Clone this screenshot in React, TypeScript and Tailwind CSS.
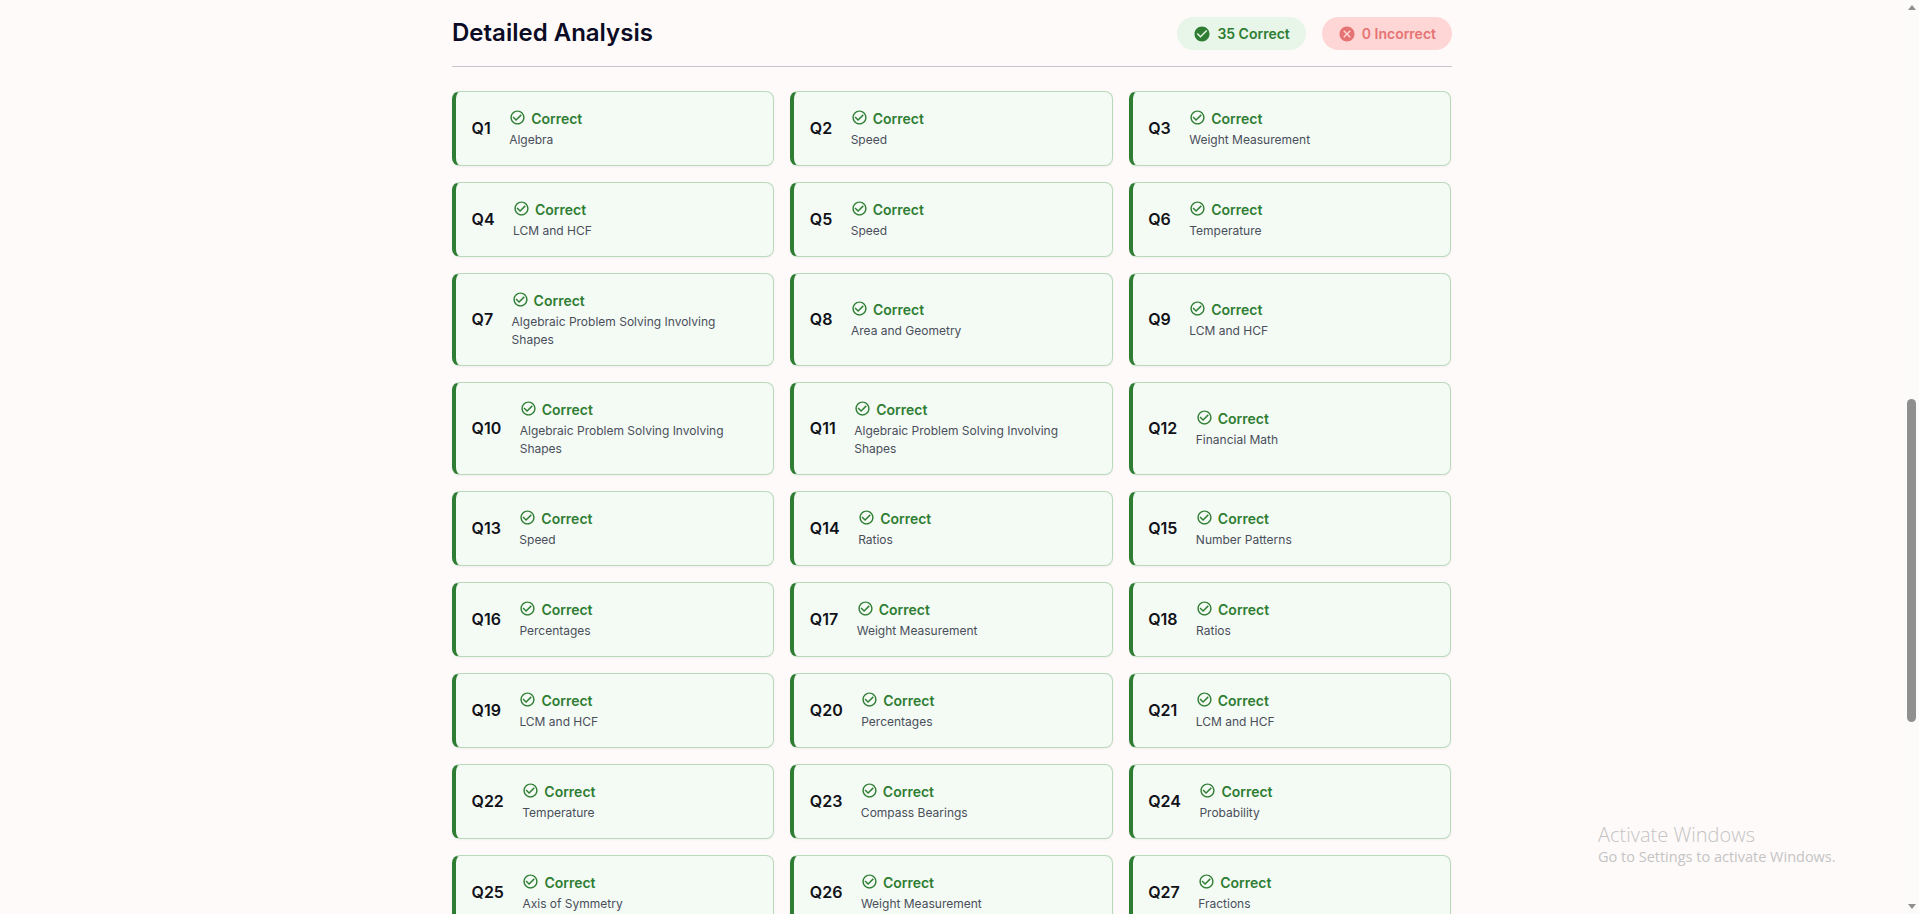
import { MdCancel, MdCheckCircle, MdCheckCircleOutline } from "react-icons/md";

const topics = [
  "Algebra",
  "Speed",
  "Weight Measurement",
  "LCM and HCF",
  "Speed",
  "Temperature",
  "Algebraic Problem Solving Involving Shapes",
  "Area and Geometry",
  "LCM and HCF",
  "Algebraic Problem Solving Involving Shapes",
  "Algebraic Problem Solving Involving Shapes",
  "Financial Math",
  "Speed",
  "Ratios",
  "Number Patterns",
  "Percentages",
  "Weight Measurement",
  "Ratios",
  "LCM and HCF",
  "Percentages",
  "LCM and HCF",
  "Temperature",
  "Compass Bearings",
  "Probability",
  "Axis of Symmetry",
  "Weight Measurement",
  "Fractions",
];

function QuestionCard({ index, topic }: { index: number; topic: string }) {
  return (
    <div className="flex items-center gap-[18.5px] rounded-lg border border-l-4 border-[#b9d9bb] border-l-[#2e7d32] bg-[#f4fbf5] py-4 pl-[15.5px] pr-4 shadow-[0_1px_3px_rgba(0,0,0,0.05)]">
      <div className="pb-[2px] text-base font-semibold leading-6 text-[#111118]">Q{index + 1}</div>
      <div className="min-w-0 flex-1">
        <div className="flex items-center gap-[5px] text-sm font-semibold leading-[21px] text-[#2e7d32]">
          <MdCheckCircleOutline size={17} className="-mt-[2px] shrink-0" />
          <span>Correct</span>
        </div>
        <div className="mt-[2px] text-xs leading-[18px] text-[#4a4e5a]">{topic}</div>
      </div>
    </div>
  );
}

export default function App() {
  return (
    <div className="relative flex h-screen overflow-hidden bg-[#fdfbfa] font-['Inter',sans-serif]">
      <main className="h-full min-w-0 flex-1 overflow-hidden bg-[#fefaf9] pt-[17px]">
        <div className="mx-auto w-[1000px]">
          <div className="flex items-center justify-between border-b border-[#c6c6d0] pb-4">
            <h2 className="self-start text-2xl font-semibold leading-[31px] text-[#0b0b25]">Detailed Analysis</h2>
            <div className="flex gap-4">
              <div className="flex h-[33px] items-center gap-[6px] rounded-full bg-[#e8f5e9] px-4 text-sm font-semibold text-[#2e7d32]">
                <MdCheckCircle size={18} />
                <span>35 Correct</span>
              </div>
              <div className="flex h-[33px] items-center gap-[6px] rounded-full bg-[#ffd6d6] px-4 text-sm font-semibold text-[#e57373]">
                <MdCancel size={18} />
                <span>0 Incorrect</span>
              </div>
            </div>
          </div>
          <div className="mt-6 grid w-[999px] grid-cols-3 gap-4">
            {topics.map((topic, index) => (
              <QuestionCard key={index} index={index} topic={topic} />
            ))}
          </div>
        </div>
      </main>

      <div className="flex h-full w-[15px] shrink-0 flex-col items-center">
        <div className="mt-[5px] h-0 w-0 border-x-[4px] border-b-[5px] border-x-transparent border-b-[#8f8f8f]" />
        <div className="mt-[389px] h-[323px] w-[9px] rounded-full bg-[#8f8f8f]" />
        <div className="mt-[182px] h-0 w-0 border-x-[4px] border-t-[5px] border-x-transparent border-t-[#8f8f8f]" />
      </div>

      <div className="pointer-events-none absolute left-[1598px] top-[822px] font-['Open_Sans',sans-serif] text-[#c4c4c4]">
        <div className="text-[20px] font-light leading-[25px]">Activate Windows</div>
        <div className="text-[14.5px] leading-[20px]">Go to Settings to activate Windows.</div>
      </div>
    </div>
  );
}
